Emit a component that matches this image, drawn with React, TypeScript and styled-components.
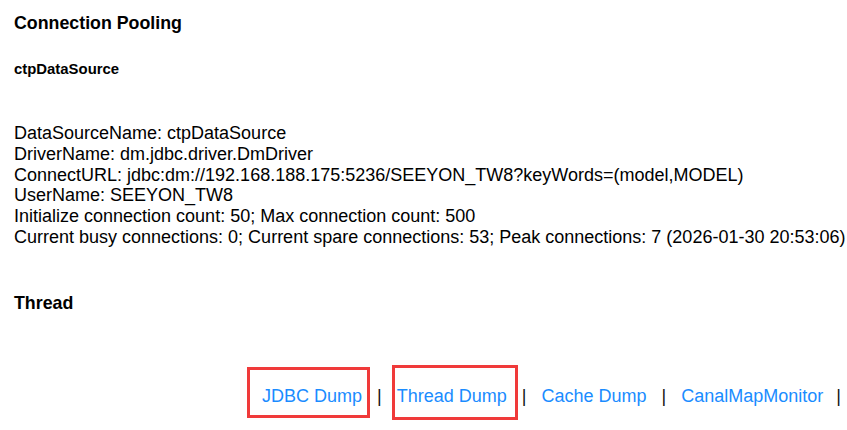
import React from "react";
import styled, { createGlobalStyle } from "styled-components";

const Global = createGlobalStyle`
  html, body { margin: 0; padding: 0; background: #fff; }
  body { font-family: "Liberation Sans", Arial, sans-serif; color: #000; }
`;

const Page = styled.div`
  width: 847px;
  height: 430px;
  box-sizing: border-box;
  padding: 12px 0 0 14px;
  display: flex;
  flex-direction: column;
  position: relative;
  overflow: hidden;
`;

const Title = styled.h3`
  margin: 0;
  font-size: 17.8px;
  font-weight: bold;
  line-height: 22px;
`;

const SubTitle = styled.h5`
  margin: 26px 0 0 0;
  font-size: 14.9px;
  font-weight: bold;
  line-height: 18px;
`;

const Info = styled.div`
  margin-top: 45px;
  font-size: 18px;
  line-height: 20.8px;
  white-space: nowrap;
`;

const Section = styled.h3`
  margin: 44px 0 0 0;
  font-size: 17.8px;
  font-weight: bold;
  line-height: 22px;
`;

const LinkBar = styled.div`
  margin-top: 71px;
  display: flex;
  align-items: center;
  justify-content: flex-end;
  gap: 15px;
  padding-right: 6px;
  font-size: 18px;
  line-height: 22px;
`;

const Link = styled.a`
  color: #1a8cff;
  text-decoration: none;
`;

const Sep = styled.span<{ $last?: boolean }>`
  color: #111;
  margin-left: ${(p) => (p.$last ? "-2px" : "0")};
`;

const Mark = styled.div<{ $l: number; $t: number; $w: number; $h: number }>`
  position: absolute;
  left: ${(p) => p.$l}px;
  top: ${(p) => p.$t}px;
  width: ${(p) => p.$w}px;
  height: ${(p) => p.$h}px;
  box-sizing: border-box;
  border: 3px solid #f03a3a;
  pointer-events: none;
`;

const lines = [
  "DataSourceName: ctpDataSource",
  "DriverName: dm.jdbc.driver.DmDriver",
  "ConnectURL: jdbc:dm://192.168.188.175:5236/SEEYON_TW8?keyWords=(model,MODEL)",
  "UserName: SEEYON_TW8",
  "Initialize connection count: 50; Max connection count: 500",
  "Current busy connections: 0; Current spare connections: 53; Peak connections: 7 (2026-01-30 20:53:06)",
];

const links = ["JDBC Dump", "Thread Dump", "Cache Dump", "CanalMapMonitor"];

export default function App() {
  return (
    <>
      <Global />
      <Page>
        <Title>Connection Pooling</Title>
        <SubTitle>ctpDataSource</SubTitle>
        <Info>
          {lines.map((l) => (
            <div key={l}>{l}</div>
          ))}
        </Info>
        <Section>Thread</Section>
        <LinkBar>
          {links.map((l, i) => (
            <React.Fragment key={l}>
              <Link href="#">{l}</Link>
              <Sep $last={i === links.length - 1}>|</Sep>
            </React.Fragment>
          ))}
        </LinkBar>
        <Mark $l={247} $t={367} $w={123} $h={51} />
        <Mark $l={392} $t={365} $w={126} $h={55} />
      </Page>
    </>
  );
}
